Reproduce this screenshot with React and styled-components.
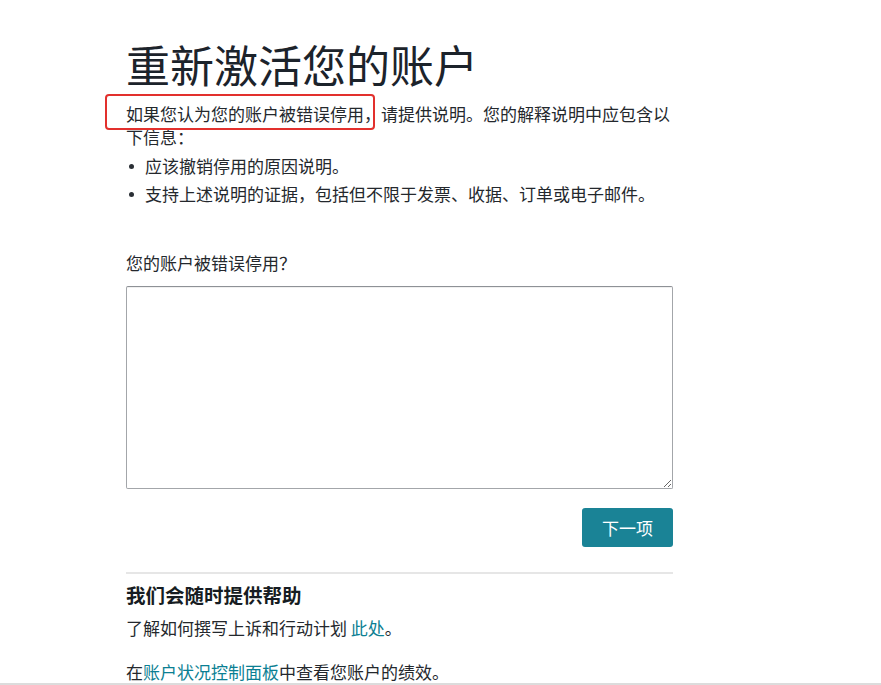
import React from 'react';
import styled, { createGlobalStyle } from 'styled-components';

const GlobalStyle = createGlobalStyle`
    body {
        margin: 0;
        background: #ffffff;
        font-family: "Noto Sans CJK SC", sans-serif;
        color: #24282d;
    }
`;

const Page = styled.div`
    height: 685px;
    box-sizing: border-box;
    border-bottom: 2px solid #dcdcdc;
    overflow: hidden;
`;

const Main = styled.main`
    width: 547px;
    margin-left: 126px;
    padding-top: 38px;
    display: flex;
    flex-direction: column;
`;

const Title = styled.h1`
    margin: 0;
    font-size: 44px;
    line-height: 52px;
    font-weight: 400;
    color: #1c232b;
`;

const Text = styled.p`
    margin: ${(p) => p.$top || 0}px 0 0;
    font-size: 17px;
    line-height: 23px;
`;

// 红框标注
const Marked = styled.span`
    position: relative;
    &::after {
        content: '';
        position: absolute;
        top: -7px;
        bottom: -4px;
        left: -21px;
        right: -11px;
        border: 2px solid #e2302d;
        border-radius: 4px;
        pointer-events: none;
    }
`;

const List = styled.ul`
    margin: 4px 0 0;
    padding: 0;
    list-style: none;
    li {
        position: relative;
        padding-left: 19px;
        font-size: 17px;
        line-height: 28px;
        &::before {
            content: '';
            position: absolute;
            left: 3px;
            top: 12px;
            width: 5px;
            height: 5px;
            border-radius: 50%;
            background: #2a2f35;
        }
    }
`;

const Label = styled.label`
    margin-top: 43px;
    font-size: 17px;
    line-height: 23px;
`;

const Field = styled.textarea`
    margin-top: 12px;
    height: 203px;
    box-sizing: border-box;
    border: 1px solid #a3a6aa;
    border-top-color: #8e9196;
    border-radius: 2px;
    box-shadow: inset 0 1px 0 rgba(0, 0, 0, 0.06);
    font: inherit;
    padding: 6px 8px;
    resize: both;
`;

const Actions = styled.div`
    display: flex;
    justify-content: flex-end;
    margin-top: 19px;
`;

const NextButton = styled.button`
    width: 91px;
    height: 39px;
    border: none;
    border-radius: 3px;
    background: #1a8396;
    color: #ffffff;
    font-family: inherit;
    font-size: 17px;
    cursor: pointer;
`;

const Divider = styled.hr`
    margin: 25px 0 0;
    border: none;
    height: 2px;
    background: #e6e6e6;
`;

const HelpTitle = styled.h2`
    margin: 8px 0 0;
    font-size: 19.5px;
    line-height: 26px;
    font-weight: 700;
    color: #161c22;
`;

const Link = styled.a`
    color: #0b7f93;
    text-decoration: none;
`;

function App() {
    return (
        <Page>
            <GlobalStyle />
            <Main>
                <Title>重新激活您的账户</Title>
                <Text $top={12}>
                    <Marked>如果您认为您的账户被错误停用</Marked>，请提供说明。您的解释说明中应包含以下信息：
                </Text>
                <List>
                    <li>应该撤销停用的原因说明。</li>
                    <li>支持上述说明的证据，包括但不限于发票、收据、订单或电子邮件。</li>
                </List>

                <Label htmlFor="appeal">您的账户被错误停用？</Label>
                <Field id="appeal" />

                <Actions>
                    <NextButton type="button">下一项</NextButton>
                </Actions>

                <Divider />
                <HelpTitle>我们会随时提供帮助</HelpTitle>
                <Text $top={8}>
                    了解如何撰写上诉和行动计划 <Link href="#">此处</Link>。
                </Text>
                <Text $top={21}>
                    在<Link href="#">账户状况控制面板</Link>中查看您账户的绩效。
                </Text>
            </Main>
        </Page>
    );
}

export default App;
